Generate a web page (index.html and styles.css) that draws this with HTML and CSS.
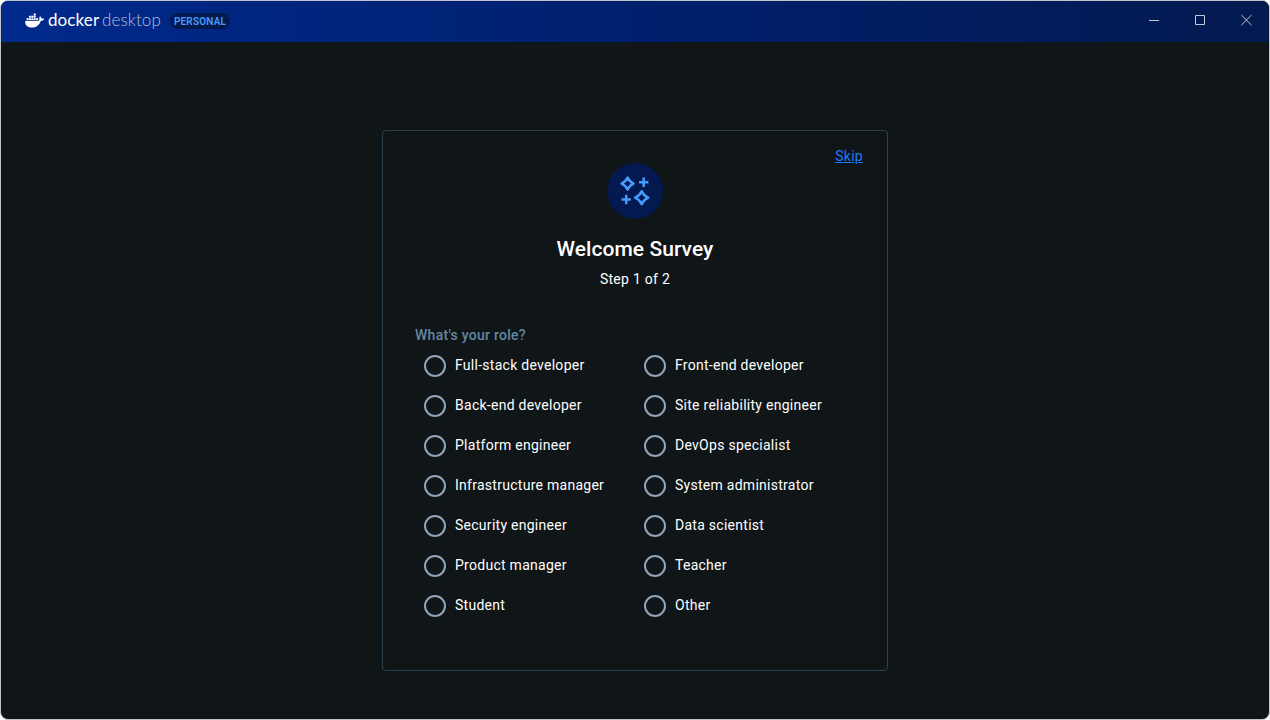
FILE: index.html
```html
<!DOCTYPE html>
<html lang="en">
<head>
<meta charset="utf-8">
<title>Docker Desktop</title>
<link rel="stylesheet" href="styles.css">
</head>
<body>
<div class="window">
  <header class="titlebar">
    <svg class="whale" width="20" height="16" viewBox="0 0 20 16" fill="#fff">
      <path d="M0.2 7.9H13.2C14 7.7 14.5 7.2 14.6 6.6C14.1 5.5 14.2 4.3 15 3.2C16 3.8 16.5 4.6 16.6 5.5C17.6 5.3 18.5 5.4 19.2 5.9C18.6 7.2 17.5 7.8 15.9 7.7C14.4 12 11.4 14.6 7 14.6C2.4 14.6-.2 12.2.2 7.9Z"/>
      <path d="M1.5 5.2h2v2.1h-2zM3.9 5.2h2v2.1h-2zM6.3 5.2h2v2.1h-2zM8.7 5.2h2v2.1h-2zM11.1 5.2h2v2.1h-2zM3.9 2.8h2v2h-2zM6.3 2.8h2v2h-2zM8.7 2.8h2v2h-2zM8.7.5h2v1.9h-2z"/>
    </svg>
    <div class="wordmark"><span class="docker">docker</span><span class="desktop">desktop</span></div>
    <span class="plan">PERSONAL</span>
    <div class="controls">
      <svg width="12" height="12" viewBox="0 0 12 12"><path d="M1 6.5h10"/></svg>
      <svg width="12" height="12" viewBox="0 0 12 12"><path d="M1.5 1.5h9v9h-9z"/></svg>
      <svg width="12" height="12" viewBox="0 0 12 12"><path d="M1.3 1l10.2 10.2M11.5 1L1.3 11.2"/></svg>
    </div>
  </header>
  <main class="content">
    <section class="card">
      <div class="skip-row"><a class="skip" href="#">Skip</a></div>
      <div class="badge">
        <svg width="32" height="32" viewBox="0 0 32 32">
          <path class="star" d="M8.6 2.6Q10.4 6.8 14.5 8.6Q10.4 10.4 8.6 14.6Q6.8 10.4 2.6 8.6Q6.8 6.8 8.6 2.6Z"/>
          <path class="star" d="M22.7 16.2Q24.7 20.7 29.2 22.7Q24.7 24.7 22.7 29.2Q20.7 24.7 16.2 22.7Q20.7 20.7 22.7 16.2Z"/>
          <path class="plus" d="M24.7 2.5v9.4M20 7.2h9.4M7.2 19.8v9.4M2.5 24.5h9.4"/>
        </svg>
      </div>
      <h1 class="title">Welcome Survey</h1>
      <p class="step">Step 1 of 2</p>
      <form class="survey">
        <div class="question">What's your role?</div>
        <div class="options">
          <label class="option"><i class="radio"></i>Full-stack developer</label>
          <label class="option"><i class="radio"></i>Front-end developer</label>
          <label class="option"><i class="radio"></i>Back-end developer</label>
          <label class="option"><i class="radio"></i>Site reliability engineer</label>
          <label class="option"><i class="radio"></i>Platform engineer</label>
          <label class="option"><i class="radio"></i>DevOps specialist</label>
          <label class="option"><i class="radio"></i>Infrastructure manager</label>
          <label class="option"><i class="radio"></i>System administrator</label>
          <label class="option"><i class="radio"></i>Security engineer</label>
          <label class="option"><i class="radio"></i>Data scientist</label>
          <label class="option"><i class="radio"></i>Product manager</label>
          <label class="option"><i class="radio"></i>Teacher</label>
          <label class="option"><i class="radio"></i>Student</label>
          <label class="option"><i class="radio"></i>Other</label>
        </div>
      </form>
    </section>
  </main>
</div>
</body>
</html>
```
FILE: styles.css
```css
* { box-sizing: border-box; }
html { background: #fff; }
body {
  margin: 0;
  font-family: Roboto, "Liberation Sans", sans-serif;
  font-size: 14px;
  color: #fff;
}
.window {
  height: 720px;
  border: 1px solid #c0c4ca;
  border-radius: 8px;
  background: #101518;
  overflow: hidden;
  display: flex;
  flex-direction: column;
}
.titlebar {
  flex: none;
  height: 41px;
  padding: 0 16px 2px 24px;
  display: flex;
  align-items: center;
  background: linear-gradient(90deg, #002a8c 0%, #00237a 30%, #001f68 60%, #041a50 100%);
}
.whale { flex: none; margin-top: 1px; }
.wordmark {
  display: flex;
  width: 113px;
  margin: -2px 0 0 3px;
  font-family: Lato, sans-serif;
  font-size: 17px;
  line-height: 20px;
}
.docker { width: 54px; letter-spacing: 0.1px; }
.desktop { font-weight: 300; color: #b3bfdd; letter-spacing: 0.1px; }
.plan {
  margin: 1px 0 0 9px;
  width: 60px;
  height: 16px;
  border-radius: 8px;
  background: #04194e;
  color: #459dff;
  font-size: 10px;
  font-weight: 600;
  line-height: 17px;
  text-align: center;
  letter-spacing: 0.2px;
}
.controls { margin: -2px 0 0 auto; padding-right: 1px; display: flex; gap: 34px; }
.controls svg { fill: none; stroke: #c3c9d8; stroke-width: 1; }
.content { padding: 88px 0 0 381px; }
.card {
  width: 506px;
  height: 541px;
  border: 1px solid #2b404e;
  border-radius: 4px;
  padding: 15px 24px 0 32px;
  display: flex;
  flex-direction: column;
}
.skip-row { height: 17px; text-align: right; line-height: 20px; }
.skip { color: #1d7bff; text-decoration: underline; letter-spacing: 0.27px; }
.badge {
  width: 56px;
  height: 56px;
  margin-left: 192px;
  border-radius: 50%;
  background: #03194f;
  display: grid;
  place-items: center;
}
.star { fill: none; stroke: #459dff; stroke-width: 2.5; stroke-linejoin: round; }
.plus { fill: none; stroke: #459dff; stroke-width: 2.5; }
.title {
  margin: 16px 8px 0 0;
  font-size: 21px;
  font-weight: 500;
  line-height: 28px;
  letter-spacing: 0.05px;
  text-align: center;
}
.step { margin: 6px 8px 0 0; line-height: 20px; text-align: center; letter-spacing: 0.27px; }
.survey { margin-top: 36px; }
.question { color: #6388a1; font-weight: 500; line-height: 20px; letter-spacing: 0.27px; }
.options {
  display: grid;
  grid-template-columns: 220px 220px;
  grid-auto-rows: 40px;
  padding-left: 9px;
}
.option {
  display: flex;
  align-items: center;
  gap: 9px;
  height: 40px;
  padding-bottom: 1px;
  line-height: 20px;
  letter-spacing: 0.27px;
}
.radio {
  width: 22px;
  height: 22px;
  margin-top: 2px;
  border: 2px solid #8fa5b8;
  border-radius: 50%;
}
```
